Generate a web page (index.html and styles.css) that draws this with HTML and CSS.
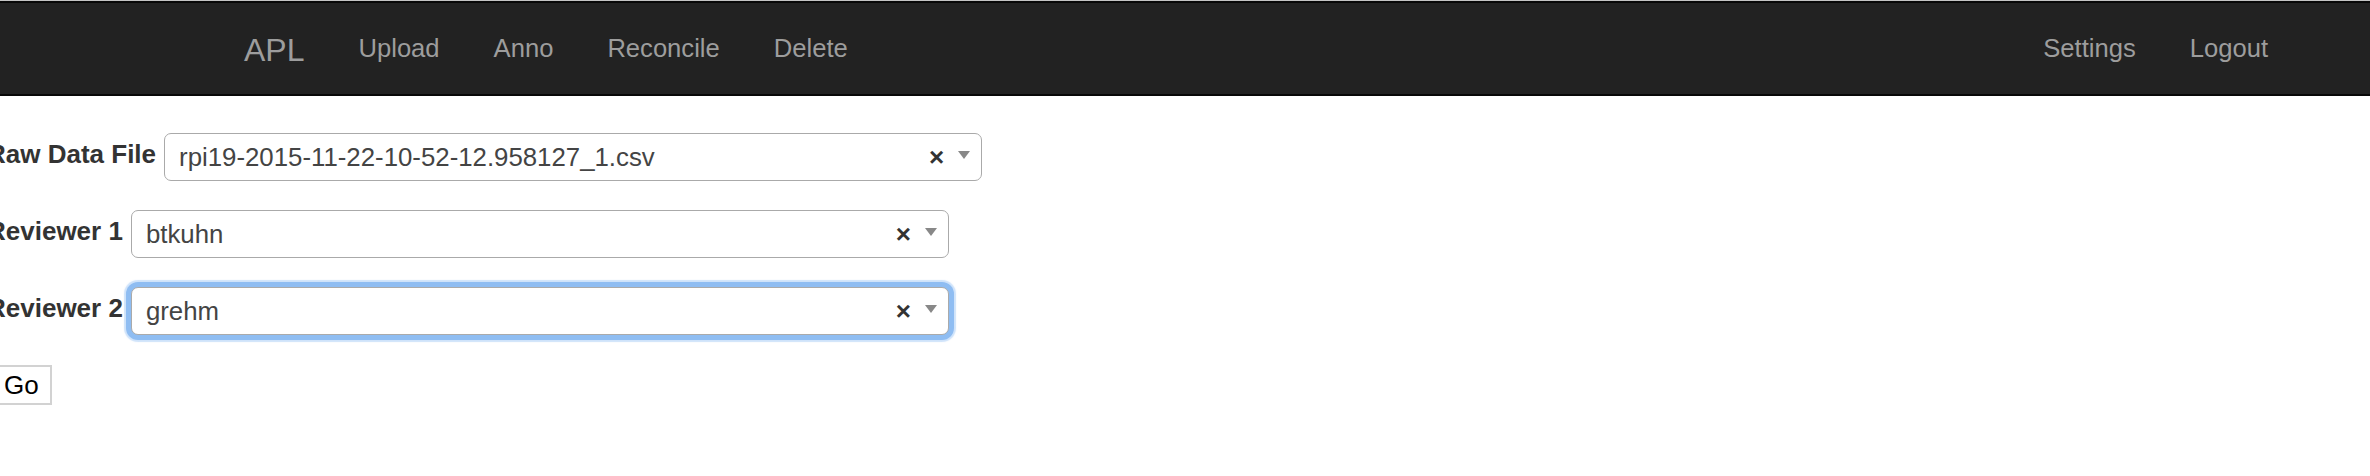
FILE: index.html
```html
<!DOCTYPE html>
<html>
<head>
<meta charset="utf-8">
<title>APL</title>
<link rel="stylesheet" href="styles.css">
</head>
<body>
<header class="topline">
  <nav class="navbar">
    <a class="brand">APL</a>
    <ul class="nav">
      <li><a>Upload</a></li>
      <li><a>Anno</a></li>
      <li><a>Reconcile</a></li>
      <li><a>Delete</a></li>
    </ul>
    <ul class="nav nav-right">
      <li><a>Settings</a></li>
      <li><a>Logout</a></li>
    </ul>
  </nav>
</header>
<form class="form">
  <div class="row">
    <label class="lbl">Raw Data File</label>
    <div class="sel">
      <span class="sel-text">rpi19-2015-11-22-10-52-12.958127_1.csv</span>
      <span class="sel-clear">&times;</span>
      <span class="sel-arrow"></span>
    </div>
  </div>
  <div class="row">
    <label class="lbl">Reviewer 1</label>
    <div class="sel">
      <span class="sel-text">btkuhn</span>
      <span class="sel-clear">&times;</span>
      <span class="sel-arrow"></span>
    </div>
  </div>
  <div class="row">
    <label class="lbl">Reviewer 2</label>
    <div class="sel sel-focus">
      <span class="sel-text">grehm</span>
      <span class="sel-clear">&times;</span>
      <span class="sel-arrow"></span>
    </div>
  </div>
  <div class="actions">
    <button type="button" class="btn">Go</button>
  </div>
</form>
</body>
</html>
```
FILE: styles.css
```css
html, body {
  margin: 0;
  padding: 0;
  background: #fff;
  font-family: "Liberation Sans", Arial, Helvetica, sans-serif;
  color: #333;
}

.topline {
  border-top: 1px solid #c4c4c4;
}

.navbar {
  display: flex;
  align-items: center;
  height: 91px;
  background: #222;
  border-top: 2px solid #080808;
  border-bottom: 2px solid #080808;
  padding: 0 75px 0 244px;
}

.brand {
  font-size: 32px;
  color: #9d9d9d;
  padding-right: 27px;
  line-height: 1;
  margin-top: 2px;
}

.nav {
  display: flex;
  list-style: none;
  margin: 0;
  padding: 0;
}

.nav li a {
  display: block;
  padding: 0 27px;
  font-size: 25.6px;
  color: #9d9d9d;
  line-height: 1;
}

.nav-right {
  margin-left: auto;
}

.form {
  margin-left: -13px;
  padding-top: 37px;
  display: flex;
  flex-direction: column;
}

.row {
  display: flex;
  align-items: center;
  gap: 8px;
  margin-bottom: 29px;
}

.lbl {
  font-weight: bold;
  font-size: 26px;
  color: #333;
  margin-bottom: 6px;
}

.sel {
  box-sizing: border-box;
  width: 818px;
  height: 48px;
  border: 1px solid #aaa;
  border-radius: 7px;
  background: #fff;
  display: flex;
  align-items: center;
  padding-left: 14px;
  position: relative;
}

.sel-focus {
  box-shadow: 0 0 0 5px #8fbdf2, 0 0 1px 7px rgba(160, 200, 245, 0.5);
}

.sel-text {
  font-size: 25.8px;
  color: #444;
  flex: 1;
}

.sel-clear {
  font-weight: bold;
  font-size: 26px;
  color: #333;
  margin-right: 14px;
  line-height: 1;
}

.sel-arrow {
  width: 0;
  height: 0;
  border-style: solid;
  border-width: 8px 6px 0 6px;
  border-color: #888 transparent transparent transparent;
  margin-right: 11px;
  margin-top: -5px;
}

.actions {
  margin-top: 1px;
}

.btn {
  font-family: "Liberation Sans", Arial, Helvetica, sans-serif;
  font-size: 26px;
  color: #000;
  background: #fff;
  border: 2px solid #d2d2d2;
  border-radius: 0;
  padding: 2px 11px;
  margin-left: 4px;
  height: 40px;
  line-height: 1;
}
```
